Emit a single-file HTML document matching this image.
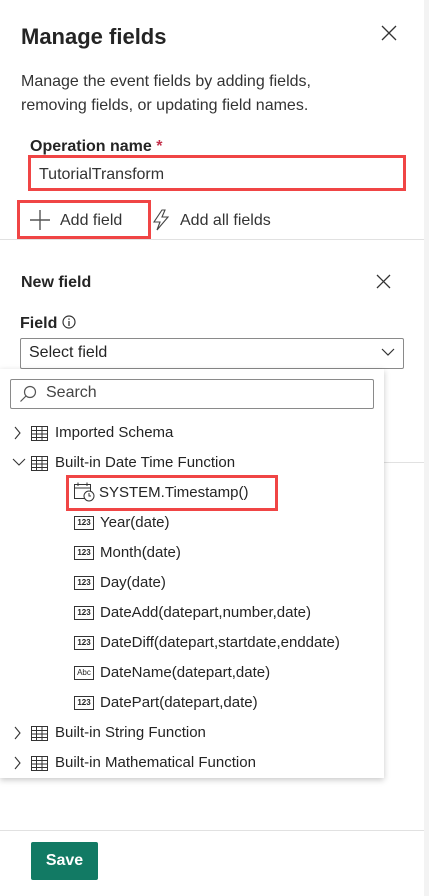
<!DOCTYPE html>
<html><head><style>
body{margin:0;width:429px;height:896px;position:relative;background:#fff;font-family:"Liberation Sans",sans-serif;color:#242424;overflow:hidden}
.a{position:absolute;white-space:nowrap}
.row{position:absolute;font-size:15px;height:20px;line-height:20px;white-space:nowrap}
.n{display:inline-block;width:18px;height:12px;border:1px solid #333;font-size:8px;line-height:12px;text-align:center;vertical-align:middle;margin-right:6px;font-weight:bold}
</style></head><body>
<div class="a" style="left:424px;top:0;width:5px;height:896px;background:#f3f3f3"></div>
<div class="a" style="left:21px;top:24px;font-size:22px;font-weight:bold">Manage fields</div>
<svg class="a" style="left:381px;top:25px" width="16" height="16"><path d="M1 1L15 15M15 1L1 15" stroke="#333" stroke-width="1.3"/></svg>
<div class="a" style="left:21px;top:70px;font-size:16px;line-height:24px;color:#333">Manage the event fields by adding fields,<br>removing fields, or updating field names.</div>
<div class="a" style="left:30px;top:138px;font-size:16px;font-weight:bold">Operation name <span style="color:#c4314b">*</span></div>
<div class="a" style="left:28px;top:155px;width:372px;height:30px;border:3px solid #f04545"></div>
<div class="a" style="left:39px;top:166px;font-size:16px;color:#333">TutorialTransform</div>
<div class="a" style="left:17px;top:200px;width:128px;height:33px;border:3px solid #f04545"></div>
<svg class="a" style="left:29px;top:209px" width="22" height="22"><path d="M11 1V21M1 11H21" stroke="#555" stroke-width="1.4"/></svg>
<div class="a" style="left:60px;top:212px;font-size:16px;color:#333">Add field</div>
<svg class="a" style="left:152px;top:209px" width="18" height="22"><path d="M10 1L2 13H8L5 21L16 8H10L13 1Z" fill="none" stroke="#444" stroke-width="1.1"/></svg>
<div class="a" style="left:180px;top:212px;font-size:16px;color:#333">Add all fields</div>
<div class="a" style="left:0;top:239px;width:424px;height:1px;background:#e1e1e1"></div>
<div class="a" style="left:21px;top:274px;font-size:16px;font-weight:bold">New field</div>
<svg class="a" style="left:376px;top:274px" width="15" height="15"><path d="M1 1L14 14M14 1L1 14" stroke="#333" stroke-width="1.3"/></svg>
<div class="a" style="left:20px;top:315px;font-size:16px;font-weight:bold">Field</div>
<svg class="a" style="left:62px;top:315px" width="14" height="14"><circle cx="7" cy="7" r="6" fill="none" stroke="#333" stroke-width="1.2"/><path d="M7 6V11M7 3.5V4.8" stroke="#333" stroke-width="1.3"/></svg>
<div class="a" style="left:20px;top:338px;width:382px;height:29px;border:1px solid #8a8a8a;border-radius:2px"></div>
<div class="a" style="left:29px;top:344px;font-size:16px">Select field</div>
<svg class="a" style="left:381px;top:348px" width="14" height="9"><path d="M1 1L7 7L13 1" fill="none" stroke="#333" stroke-width="1.2"/></svg>
<div class="a" style="left:384px;top:462px;width:40px;height:1px;background:#e1e1e1"></div>
<div class="a" style="left:0;top:369px;width:384px;height:409px;background:#fff;box-shadow:0 2px 6px rgba(0,0,0,.22)"></div>
<div class="a" style="left:10px;top:379px;width:362px;height:28px;border:1px solid #8a8a8a;border-radius:2px"></div>
<svg class="a" style="left:19px;top:385px" width="18" height="18"><circle cx="11" cy="7" r="5.5" fill="none" stroke="#555" stroke-width="1.2"/><path d="M7 11L1.5 16.5" stroke="#555" stroke-width="1.2"/></svg>
<div class="a" style="left:46px;top:384px;font-size:16px;color:#444">Search</div>
<svg width="0" height="0" style="position:absolute"><defs><g id="tb"><rect x="0.5" y="0.5" width="16" height="14" fill="none" stroke="#333"/><path d="M0.5 4.5H16.5M0.5 8H16.5M0.5 11.5H16.5M5.5 0.5V14.5M11 0.5V14.5" stroke="#333"/></g></defs></svg>
<svg class="a" style="left:14px;top:426px" width="36" height="16"><path d="M1 1L6 7L1 13" fill="none" stroke="#333" stroke-width="1.1"/><g transform="translate(17,0)"><use href="#tb"/></g></svg>
<div class="row" style="left:55px;top:423px">Imported Schema</div>
<svg class="a" style="left:12px;top:456px" width="38" height="16"><path d="M1 3L7 9L13 3" fill="none" stroke="#333" stroke-width="1.1"/><g transform="translate(19,0)"><use href="#tb"/></g></svg>
<div class="row" style="left:55px;top:453px">Built-in Date Time Function</div>
<div class="a" style="left:66px;top:475px;width:206px;height:30px;border:3px solid #f04545"></div>
<svg class="a" style="left:74px;top:482px" width="21" height="20"><rect x="0.5" y="2.5" width="16" height="14" fill="none" stroke="#333"/><path d="M0.5 6H16.5M4 0.5V4M13 0.5V4" stroke="#333"/><circle cx="15" cy="14" r="5" fill="#fff" stroke="#333"/><path d="M15 11V14H17" fill="none" stroke="#333"/></svg>
<div class="row" style="left:99px;top:483px">SYSTEM.Timestamp()</div>
<div class="row" style="left:74px;top:513px"><span class="n">123</span>Year(date)</div>
<div class="row" style="left:74px;top:543px"><span class="n">123</span>Month(date)</div>
<div class="row" style="left:74px;top:573px"><span class="n">123</span>Day(date)</div>
<div class="row" style="left:74px;top:603px"><span class="n">123</span>DateAdd(datepart,number,date)</div>
<div class="row" style="left:74px;top:633px"><span class="n">123</span>DateDiff(datepart,startdate,enddate)</div>
<div class="row" style="left:74px;top:663px"><span class="n" style="font-weight:normal">Abc</span>DateName(datepart,date)</div>
<div class="row" style="left:74px;top:693px"><span class="n">123</span>DatePart(datepart,date)</div>
<svg class="a" style="left:14px;top:726px" width="36" height="16"><path d="M1 1L6 7L1 13" fill="none" stroke="#333" stroke-width="1.1"/><g transform="translate(17,0)"><use href="#tb"/></g></svg>
<div class="row" style="left:55px;top:723px">Built-in String Function</div>
<svg class="a" style="left:14px;top:756px" width="36" height="16"><path d="M1 1L6 7L1 13" fill="none" stroke="#333" stroke-width="1.1"/><g transform="translate(17,0)"><use href="#tb"/></g></svg>
<div class="row" style="left:55px;top:753px">Built-in Mathematical Function</div>
<div class="a" style="left:0;top:830px;width:424px;height:1px;background:#e1e1e1"></div>
<div class="a" style="left:31px;top:842px;width:67px;height:38px;background:#127a64;border-radius:2px;color:#fff;font-size:16px;font-weight:bold;text-align:center;line-height:38px">Save</div>
</body></html>
